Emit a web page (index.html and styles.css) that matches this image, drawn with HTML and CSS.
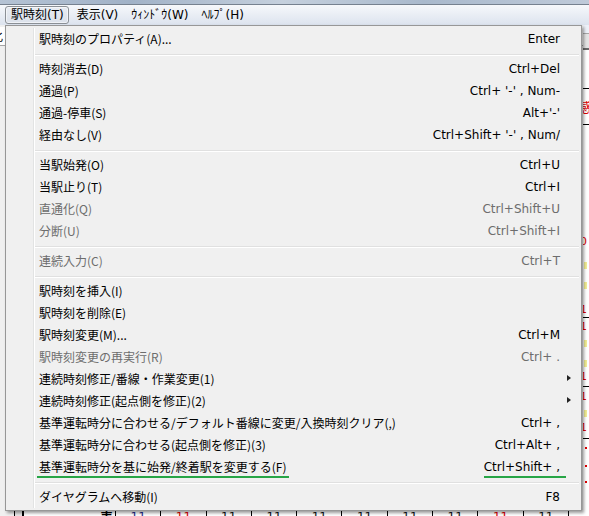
FILE: index.html
```html
<!DOCTYPE html>
<html lang="ja">
<head>
<meta charset="utf-8">
<title>駅時刻</title>
<link rel="stylesheet" href="styles.css">
</head>
<body>
<div class="app">
  <div class="glass"></div>
  <nav class="menubar">
    <span class="mb-item active">駅時刻(T)</span>
    <span class="mb-item">表示(V)</span>
    <span class="mb-item">ｳｨﾝﾄﾞｳ(W)</span>
    <span class="mb-item">ﾍﾙﾌﾟ(H)</span>
  </nav>
  <div class="workspace">
    <div class="ws-main">
      <div class="leftpane">
        <div class="lp-gap"></div>
        <div class="lp-input"><span class="lp-frag">化</span></div>
        <div class="lp-body"></div>
      </div>
      <div class="rightcol">
        <div class="rc-tab"></div>
        <div class="rc-tool"></div>
        <div class="rc-sunk"></div>
        <div class="rc-white"></div>
        <div class="rc-rule"></div>
        <div class="rc-head">感</div>
        <div class="rc-rule"></div>
        <div class="rc-digit g112">0</div>
        <div class="rc-yel g15"></div>
        <div class="rc-yel g13"></div>
        <div class="rc-digit g16">1</div>
        <div class="rc-rule g2"></div>
        <div class="rc-digit g4">1</div>
        <div class="rc-yel g8"></div>
        <div class="rc-yel g13"></div>
        <div class="rc-digit g5">1</div>
        <div class="rc-rule g4"></div>
        <div class="rc-digit g5">1</div>
        <div class="rc-yel g8"></div>
        <div class="rc-digit g6">1</div>
        <div class="rc-rule g5"></div>
        <div class="rc-dot g8"></div>
        <div class="rc-dot g16"></div>
        <div class="rc-dot g14"></div>
      </div>
    </div>
    <div class="ws-bottom">
      <div class="wb-edge"></div>
      <div class="wb-bar"></div>
      <div class="wb-name">表</div>
      <div class="wb-cell blue">11</div>
      <div class="wb-cell red">11</div>
      <div class="wb-cell">11</div>
      <div class="wb-cell">11</div>
      <div class="wb-cell">11</div>
      <div class="wb-cell">11</div>
      <div class="wb-cell">11</div>
      <div class="wb-cell">11</div>
      <div class="wb-cell red">11</div>
      <div class="wb-cell">11</div>
      <div class="wb-cell wb-last"></div>
    </div>
  </div>

  <div class="popup">
    <div class="mi"><span class="ml">駅時刻のプロパティ(A)...</span><span class="ms">Enter</span><span class="ma"></span></div>
    <div class="sep"></div>
    <div class="mi"><span class="ml">時刻消去(D)</span><span class="ms">Ctrl+Del</span><span class="ma"></span></div>
    <div class="mi"><span class="ml">通過(P)</span><span class="ms">Ctrl+ '-' , Num-</span><span class="ma"></span></div>
    <div class="mi"><span class="ml">通過-停車(S)</span><span class="ms">Alt+'-'</span><span class="ma"></span></div>
    <div class="mi"><span class="ml">経由なし(V)</span><span class="ms">Ctrl+Shift+ '-' , Num/</span><span class="ma"></span></div>
    <div class="sep"></div>
    <div class="mi"><span class="ml">当駅始発(O)</span><span class="ms">Ctrl+U</span><span class="ma"></span></div>
    <div class="mi"><span class="ml">当駅止り(T)</span><span class="ms">Ctrl+I</span><span class="ma"></span></div>
    <div class="mi dis"><span class="ml">直通化(Q)</span><span class="ms">Ctrl+Shift+U</span><span class="ma"></span></div>
    <div class="mi dis"><span class="ml">分断(U)</span><span class="ms">Ctrl+Shift+I</span><span class="ma"></span></div>
    <div class="sep"></div>
    <div class="mi dis"><span class="ml">連続入力(C)</span><span class="ms">Ctrl+T</span><span class="ma"></span></div>
    <div class="sep"></div>
    <div class="mi"><span class="ml">駅時刻を挿入(I)</span><span class="ma"></span></div>
    <div class="mi"><span class="ml">駅時刻を削除(E)</span><span class="ma"></span></div>
    <div class="mi"><span class="ml">駅時刻変更(M)...</span><span class="ms">Ctrl+M</span><span class="ma"></span></div>
    <div class="mi dis"><span class="ml">駅時刻変更の再実行(R)</span><span class="ms">Ctrl+ .</span><span class="ma"></span></div>
    <div class="mi"><span class="ml">連続時刻修正/番線・作業変更(1)</span><span class="ma sub"></span></div>
    <div class="mi"><span class="ml">連続時刻修正(起点側を修正)(2)</span><span class="ma sub"></span></div>
    <div class="mi"><span class="ml">基準運転時分に合わせる/デフォルト番線に変更/入換時刻クリア(,)</span><span class="ms">Ctrl+ ,</span><span class="ma"></span></div>
    <div class="mi"><span class="ml">基準運転時分に合わせる(起点側を修正)(3)</span><span class="ms">Ctrl+Alt+ ,</span><span class="ma"></span></div>
    <div class="mi"><span class="ml mark">基準運転時分を基に始発/終着駅を変更する(F)</span><span class="ms mark">Ctrl+Shift+ ,</span><span class="ma"></span></div>
    <div class="sep"></div>
    <div class="mi"><span class="ml">ダイヤグラムへ移動(I)</span><span class="ms">F8</span><span class="ma"></span></div>
  </div>
</div>
</body>
</html>
```

FILE: styles.css
```css
* { box-sizing: border-box; }
html, body { margin: 0; padding: 0; }
body {
  width: 589px;
  height: 516px;
  overflow: hidden;
  background: #f0f0f0;
  font-family: "Noto Sans CJK JP", sans-serif;
  font-size: 12px;
  color: #000;
}
.app {
  position: relative;
  width: 589px;
  height: 516px;
  display: flex;
  flex-direction: column;
}

/* title glass strip */
.glass {
  height: 5px;
  flex: none;
  background: linear-gradient(90deg, #b5c3d4 0%, #a1b2c7 22%, #c5d0dd 48%, #a9b9cc 72%, #bfcad9 100%);
  border-bottom: 1px solid #76818f;
}

/* menubar */
.menubar {
  height: 20px;
  flex: none;
  display: flex;
  gap: 2px;
  padding-left: 5px;
  background: linear-gradient(#f6f8fb, #dce3ee);
  font-family: "DejaVu Sans", "Noto Sans CJK JP", sans-serif;
}
.mb-item {
  height: 18px;
  margin-top: 1px;
  padding: 0 4px 0 5px;
  border: 1px solid transparent;
  border-radius: 3px;
  line-height: 16px;
  white-space: nowrap;
}
.mb-item.active {
  border-color: #8b9096;
  background: linear-gradient(#e8ecf2, #dbe1ea);
  box-shadow: inset 0 0 0 1px rgba(255, 255, 255, 0.55);
}

/* background window */
.workspace {
  flex: 1;
  display: flex;
  flex-direction: column;
}
.ws-main {
  flex: 1;
  display: flex;
}
.leftpane {
  width: 583px;
  display: flex;
  flex-direction: column;
}
.lp-gap { height: 2px; }
.lp-input {
  height: 19px;
  background: #fff;
  border-bottom: 1px solid #a5a5a5;
  overflow: hidden;
  white-space: nowrap;
  line-height: 18px;
  text-indent: -9px;
}
.lp-body { flex: 1; background: #f0f0f0; }

.rightcol {
  flex: 1;
  background: #fff;
  display: flex;
  flex-direction: column;
  overflow: hidden;
}
.rc-tab { height: 8px; background: #edf1f8; }
.rc-tool { height: 15px; background: #e4e4e4; border-top: 1px solid #a8a8a8; }
.rc-sunk { height: 2px; background: #6b6b6b; }
.rc-white { height: 38px; }
.rc-rule { height: 1px; background: #000; flex: none; }
.rc-head {
  height: 35px;
  color: #e00000;
  font-size: 13px;
  line-height: 35px;
  text-indent: -4px;
  white-space: nowrap;
}
.rc-digit {
  height: 10px;
  flex: none;
  color: #e00000;
  font-family: "DejaVu Sans", sans-serif;
  font-size: 11px;
  line-height: 10px;
  text-indent: -3px;
}
.rc-yel { height: 7px; width: 3px; flex: none; background: #f3ee95; margin-left: 1px; }
.rc-dot { height: 2px; width: 2px; flex: none; background: #e00000; margin-left: 2px; }
.g2 { margin-top: 2px; }
.g4 { margin-top: 4px; }
.g5 { margin-top: 5px; }
.g6 { margin-top: 6px; }
.g8 { margin-top: 8px; }
.g13 { margin-top: 13px; }
.g14 { margin-top: 14px; }
.g15 { margin-top: 15px; }
.g16 { margin-top: 16px; }
.g112 { margin-top: 112px; }

.ws-bottom {
  height: 6px;
  flex: none;
  display: flex;
  background: #fff;
  overflow: hidden;
}
.wb-edge { width: 14px; background: #f0f0f0; }
.wb-bar { width: 8px; background: #e6e6e6; border-left: 1px solid #000; }
.wb-name {
  width: 93px;
  border-left: 2px solid #000;
  text-align: right;
  padding-right: 2px;
  font-size: 13px;
  line-height: 14px;
  font-weight: bold;
}
.wb-cell {
  width: 45.3px;
  flex: none;
  border-left: 1px solid #000;
  text-align: center;
  font-family: "DejaVu Sans", sans-serif;
  font-size: 12px;
  line-height: 12px;
  padding-top: 1px;
  color: #111;
}
.wb-cell.red { color: #e00000; }
.wb-cell.blue { color: #1f2a8a; }
.wb-last { flex: 1; }

/* popup menu */
.popup {
  position: absolute;
  left: 5px;
  top: 25px;
  width: 577px;
  height: 486px;
  padding: 2px;
  background: #f0f0f0;
  border: 1px solid #979797;
  box-shadow: 2px 2px 3px rgba(0, 0, 0, 0.4);
}
.popup::before {
  content: "";
  position: absolute;
  left: 27px;
  top: 2px;
  bottom: 2px;
  width: 2px;
  background: linear-gradient(90deg, #e2e3e3 50%, #ffffff 50%);
}
.mi {
  position: relative;
  height: 22px;
  display: flex;
  align-items: center;
  padding-left: 31px;
  line-height: 22px;
  white-space: nowrap;
}
.ml { margin-right: auto; position: relative; }
.ms {
  position: relative;
  font-family: "DejaVu Sans", sans-serif;
  font-size: 12px;
  white-space: pre;
}
.ma {
  position: relative;
  width: 19px;
  height: 22px;
  flex: none;
}
.ma.sub::after {
  content: "";
  position: absolute;
  left: 7px;
  top: 7px;
  width: 0;
  height: 0;
  border-left: 4px solid #222;
  border-top: 3.5px solid transparent;
  border-bottom: 3.5px solid transparent;
}
.mi.dis { color: #6d6d6d; }
.sep {
  position: relative;
  height: 8px;
  margin-left: 27px;
  background: linear-gradient(transparent 4px, #e0e0e0 4px, #e0e0e0 5px, #ffffff 5px, #ffffff 6px, transparent 6px);
}
.ml.mark::after,
.ms.mark::after {
  content: "";
  position: absolute;
  bottom: 0;
  height: 2px;
  background: #27a546;
}
.ml.mark::after { left: -2px; right: -3px; }
.ms.mark::after { left: 0; right: -6px; }
```
